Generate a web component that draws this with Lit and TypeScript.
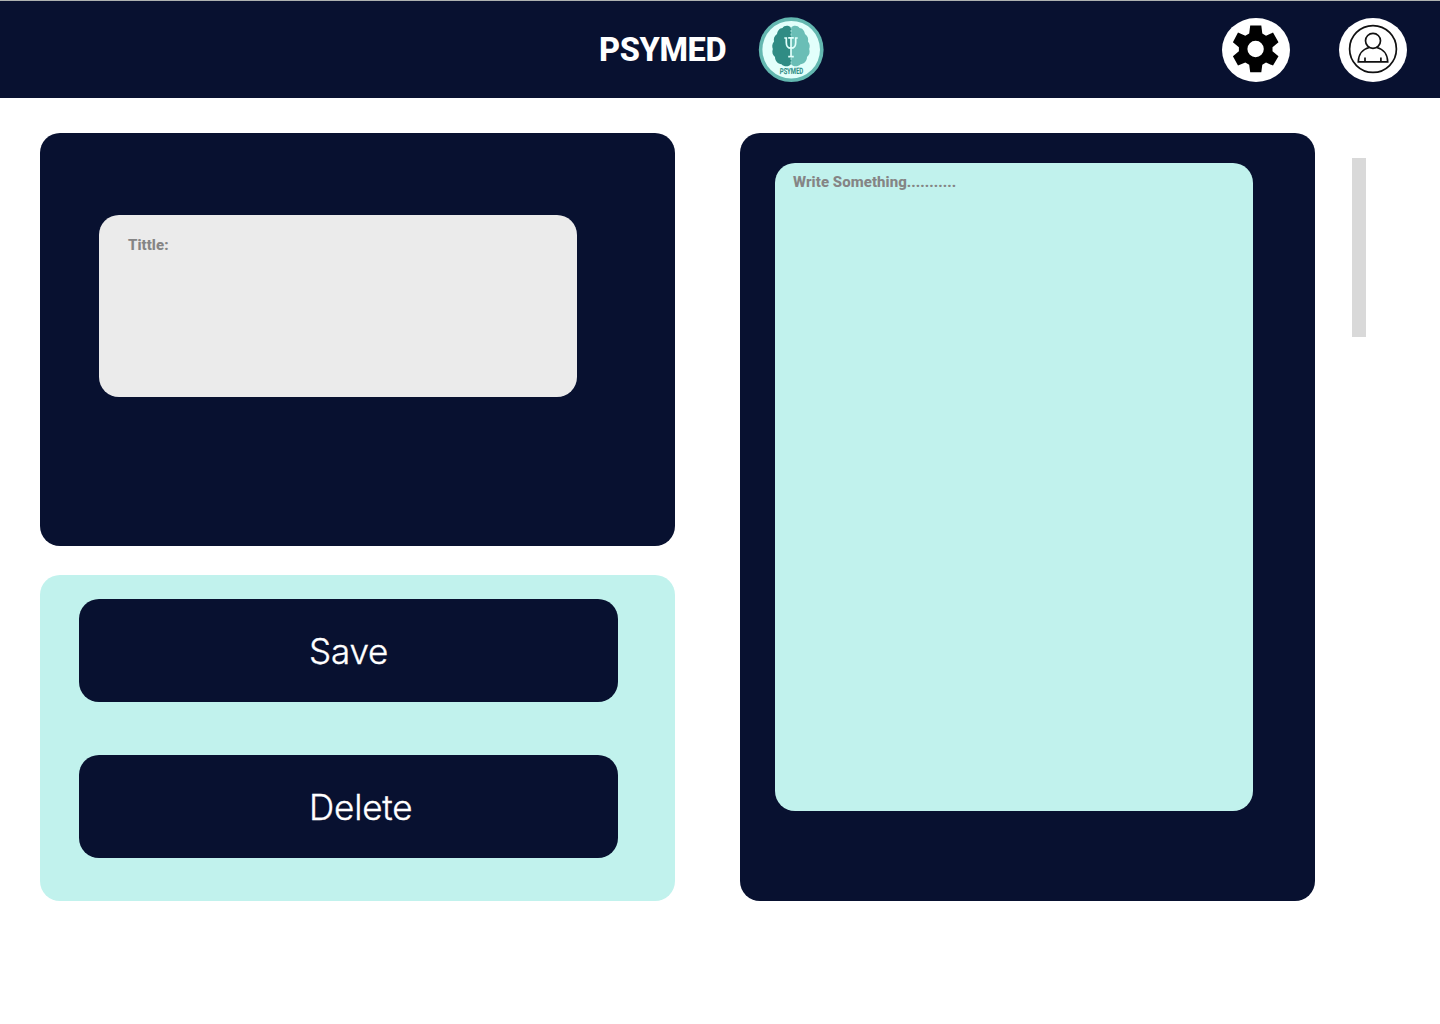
import { LitElement, html, css } from "lit";
import { customElement } from "lit/decorators.js";

@customElement("app-root")
export class AppRoot extends LitElement {
  static styles = css`
    :host {
      display: block;
      height: 1024px;
      background: #fff;
      overflow: hidden;
      --navy: #081130;
      --mint: #c1f2ed;
    }
    * {
      box-sizing: border-box;
    }
    svg {
      display: block;
    }
    .header {
      display: flex;
      align-items: center;
      height: 98px;
      padding: 0 33px 0 599px;
      background: var(--navy);
      border-top: 1px solid #aeb2b0;
    }
    .brand {
      margin: 0;
      padding-top: 1px;
      width: 159px;
      font: 800 32.5px/40px Roboto, sans-serif;
      letter-spacing: -0.35px;
      color: #fff;
    }
    .logo {
      width: 66px;
      height: 66px;
    }
    .actions {
      display: flex;
      gap: 49px;
      margin-left: auto;
    }
    .round {
      width: 68px;
      height: 64px;
      padding: 0;
      border: 0;
      border-radius: 50%;
      background: #fff;
    }
    .main {
      display: flex;
      align-items: flex-start;
      padding: 35px 0 0 40px;
    }
    .left {
      display: flex;
      flex-direction: column;
      gap: 29px;
      width: 635px;
    }
    .title-card {
      height: 413px;
      padding: 82px 0 0 59px;
      border-radius: 20px;
      background: var(--navy);
    }
    .field {
      width: 478px;
      border-radius: 20px;
      font: 800 15px/18px Roboto, sans-serif;
      letter-spacing: 0.05px;
      color: #858585;
    }
    .title-field {
      height: 182px;
      padding: 21px 29px;
      background: #ebebeb;
    }
    .button-card {
      display: flex;
      flex-direction: column;
      gap: 53px;
      height: 326px;
      padding: 24px 0 0 39px;
      border-radius: 20px;
      background: var(--mint);
    }
    .button {
      width: 539px;
      height: 103px;
      padding: 0 0 0 230px;
      border: 0;
      border-radius: 20px;
      background: var(--navy);
      color: #fff;
      font: 300 35px/42px Inter, sans-serif;
      letter-spacing: -0.15px;
      -webkit-text-stroke: 0.35px #fff;
      text-align: left;
    }
    .note-card {
      width: 575px;
      height: 768px;
      margin-left: 65px;
      padding: 30px 0 0 35px;
      border-radius: 20px;
      background: var(--navy);
    }
    .note-field {
      height: 648px;
      padding: 10px 18px;
      background: var(--mint);
    }
    .scrollbar {
      width: 14px;
      height: 179px;
      margin: 25px 0 0 37px;
      background: #d9d9d9;
    }
    .logo-text {
      font: 700 8.600px Roboto, sans-serif;
      fill: #2f8c84;
    }
  `;

  render() {
    return html`
      <header class="header">
        <h1 class="brand">PSYMED</h1>
        <svg class="logo" viewBox="0 0 66 66">
          <circle cx="33.200" cy="32.700" r="32.400" fill="#63b8b0" />
          <circle cx="33.200" cy="32.700" r="28.800" fill="#e2fffb" />
          <path fill="#2f8c84" d="M33 10.5C30.5 8 26 8.5 24.5 11C21.5 11 19.5 14 19 17C16 19 15.500 22 16 24.500C13.800 27 14 30 14.800 32C13.800 35 14.500 38 17 40C17 44 20 47 23.500 47.200C26 50 31 50 33 47Z" />
          <path fill="#6abeb6" d="M33 10.5C35.500 8 40 8.500 41.500 11C44.500 11 46.500 14 47 17C50 19 50.500 22 50 24.500C52.200 27 52 30 51.200 32C52.200 35 51.500 38 49 40C49 44 46 47 42.500 47.200C40 50 35 50 33 47Z" />
          <path fill="none" stroke="#e2fffb" stroke-width="1.700" d="M33 20V40.500M30.200 20.800H35.800M30.200 39.600H35.800M26.300 21H28.300V25.500C28.300 29.500 30 31.200 33 31.200S37.700 29.500 37.700 25.500V21H39.700" />
          <path fill="none" stroke="#e2fffb" stroke-width=".6" stroke-dasharray="2 1.500" d="M33 9.500V20M33 41V48" />
          <text class="logo-text" x="21.500" y="57" rotate="6 4 1 -1 -4 -6" textLength="24" lengthAdjust="spacingAndGlyphs">PSYMED</text>
        </svg>
        <div class="actions">
          <button class="round" aria-label="Settings">
            <svg width="68" height="64" viewBox="0 0 68 64">
              <path fill-rule="evenodd" d="M28.200 7.500H39.300L40.300 15.500L44 17.800L51 14.600L56.500 24.200L50.500 29.200V33.200L56.500 38.200L51 47.600L44 44.600L40.300 46.800L39.300 54.300H28.200L27.200 46.800L23.300 44.600L16 47.600L10.900 38.200L16.900 33.200V29.200L10.900 24.200L16 14.600L23.300 17.800L27.200 15.500ZM33.600 22.800A8.200 8.200 0 1 0 33.600 39.200A8.200 8.200 0 1 0 33.600 22.800Z" />
            </svg>
          </button>
          <button class="round" aria-label="Profile">
            <svg width="68" height="64" viewBox="0 0 68 64" fill="none" stroke="#111" stroke-width="1.700">
              <circle cx="34" cy="31" r="23.400" />
              <circle cx="34" cy="22.800" r="7.500" />
              <path d="M30.300 29.500C23.500 31 19.500 36.500 19.300 43.800H48.700C48.500 36.500 44.500 31 37.700 29.500M26 39.500V43.800M41.900 39.500V43.800" />
            </svg>
          </button>
        </div>
      </header>
      <main class="main">
        <div class="left">
          <section class="title-card">
            <div class="field title-field">Tittle:</div>
          </section>
          <section class="button-card">
            <button class="button">Save</button>
            <button class="button">Delete</button>
          </section>
        </div>
        <section class="note-card">
          <div class="field note-field">Write Something...........</div>
        </section>
        <div class="scrollbar"></div>
      </main>
    `;
  }
}
